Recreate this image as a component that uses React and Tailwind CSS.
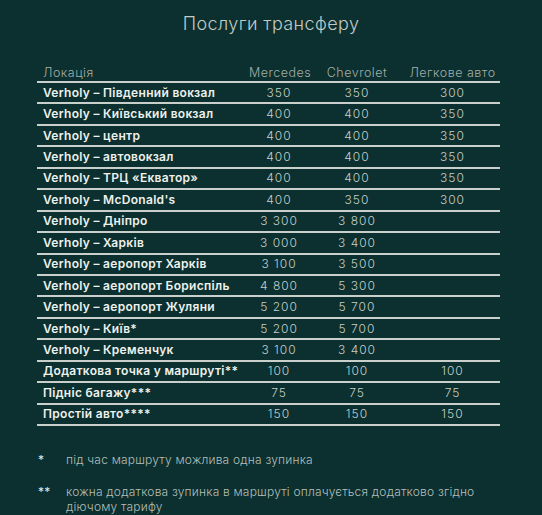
const rows = [
  ["Verholy – Південний вокзал", "350", "350", "300"],
  ["Verholy – Київський вокзал", "400", "400", "350"],
  ["Verholy – центр", "400", "400", "350"],
  ["Verholy – автовокзал", "400", "400", "350"],
  ["Verholy – ТРЦ «Екватор»", "400", "400", "350"],
  ["Verholy – McDonald's", "400", "350", "300"],
  ["Verholy – Дніпро", "3 300", "3 800", ""],
  ["Verholy – Харків", "3 000", "3 400", ""],
  ["Verholy – аеропорт Харків", "3 100", "3 500", ""],
  ["Verholy – аеропорт Бориспіль", "4 800", "5 300", ""],
  ["Verholy – аеропорт Жуляни", "5 200", "5 700", ""],
  ["Verholy – Київ*", "5 200", "5 700", ""],
  ["Verholy – Кременчук", "3 100", "3 400", ""],
  ["Додаткова точка у маршруті**", "100", "100", "100"],
  ["Підніс багажу***", "75", "75", "75"],
  ["Простій авто****", "150", "150", "150"],
];

export default function App() {
  return (
    <div
      className="w-[542px] h-[515px] overflow-hidden bg-[#0b302f]"
      style={{ fontFamily: "Inter, 'Open Sans', sans-serif" }}
    >
      <h1 className="pt-[12px] text-center text-[18px] leading-[24px] font-light tracking-[0.4px] text-[#c3cbc6]">
        Послуги трансферу
      </h1>
      <div className="mt-[28px] ml-[37px] w-[463px]">
        <div className="flex border-b-2 border-[#c9cfcb] text-[12.5px] leading-[17px] font-light tracking-[0.5px] text-[#a3aea8]">
          <div className="w-[212px] pl-[6px]">Локація</div>
          <div className="w-[60px] text-center whitespace-nowrap">Mercedes</div>
          <div className="w-[96px] text-center whitespace-nowrap">Chevrolet</div>
          <div className="w-[95px] text-center whitespace-nowrap">Легкове авто</div>
        </div>
        {rows.map((r, i) => (
          <div
            key={i}
            className="flex h-[21.45px] items-center border-b-2 border-[#c9cfcb] text-[12px]"
          >
            <div className="w-[212px] pl-[6px] font-semibold tracking-[0.3px] text-[#eef1ed] whitespace-nowrap">{r[0]}</div>
            <div className="w-[60px] text-center font-light tracking-[1px] text-[#c6cec9]">{r[1]}</div>
            <div className="w-[96px] text-center font-light tracking-[1px] text-[#c6cec9]">{r[2]}</div>
            <div className="w-[95px] text-center font-light tracking-[1px] text-[#c6cec9]">{r[3]}</div>
          </div>
        ))}
      </div>
      <div className="mt-[26px] ml-[38px] mr-[30px] text-[12px] leading-[15px] text-[#b5bfba] font-light tracking-[0.2px]">
        <div className="flex">
          <div className="w-[28px] text-[#e6ebe7] font-normal">*</div>
          <div>під час маршруту можлива одна зупинка</div>
        </div>
        <div className="flex mt-[17px]">
          <div className="w-[28px] shrink-0 text-[#e6ebe7] font-normal">**</div>
          <div className="w-[420px]">кожна додаткова зупинка в маршруті оплачується додатково згідно діючому тарифу</div>
        </div>
      </div>
    </div>
  );
}
